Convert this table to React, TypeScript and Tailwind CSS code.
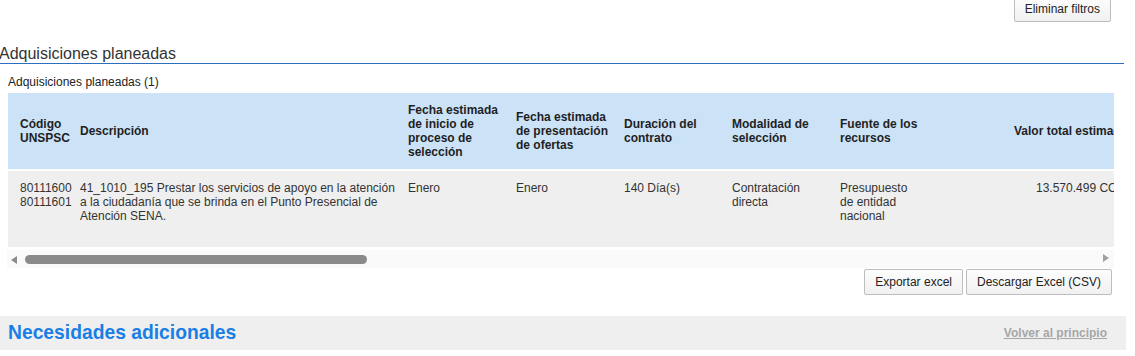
import React from "react";

const font = { fontFamily: '"Liberation Sans", Arial, sans-serif' };

function Btn({ children }: { children: React.ReactNode }) {
  return (
    <button className="h-[26px] px-[10px] border border-[#bdbdbd] rounded-[2px] bg-gradient-to-b from-[#fdfdfd] to-[#f1f1f1] text-[12px] text-[#222] leading-[14px]">
      {children}
    </button>
  );
}

export default function App() {
  const headCls = "w-[108px] shrink-0 pr-[12px] font-bold";
  const cellCls = "w-[108px] shrink-0 pr-[12px]";
  return (
    <div className="w-[1135px] h-[356px] bg-white overflow-hidden" style={font}>
      <div className="w-[1126px]">
        <div className="flex justify-end pr-[15px] -mt-[4px]">
          <Btn>Eliminar filtros</Btn>
        </div>
        <div className="mt-[23px] mr-[2px] -ml-[1px] border-b border-[#2d6fbe] text-[16px] leading-[18px] text-[#333]">
          Adquisiciones planeadas
        </div>
        <div className="mt-[11px] ml-[8px] text-[12px] leading-[14px] text-[#222]">
          Adquisiciones planeadas (1)
        </div>
        <div className="mt-[4px] ml-[8px] w-[1106px] overflow-hidden text-[12px] leading-[14px]">
          <div className="w-[1400px]">
            <div className="flex items-center h-[76px] bg-[#cce2f7] text-[#1f1f1f]">
              <div className="w-[72px] shrink-0 pl-[12px] font-bold">
                Código
                <br />
                UNSPSC
              </div>
              <div className="w-[328px] shrink-0 pr-[12px] font-bold">Descripción</div>
              <div className={headCls}>Fecha estimada de inicio de proceso de selección</div>
              <div className={headCls}>Fecha estimada de presentación de ofertas</div>
              <div className={headCls}>Duración del contrato</div>
              <div className={headCls}>Modalidad de selección</div>
              <div className={headCls}>Fuente de los recursos</div>
              <div className="w-[300px] shrink-0 pl-[66px] font-bold whitespace-nowrap">
                Valor total estimado
              </div>
            </div>
            <div className="flex items-start h-[76px] mt-[2px] pt-[10px] bg-[#efefef] text-[#333]">
              <div className="w-[72px] shrink-0 pl-[12px]">
                80111600
                <br />
                80111601
              </div>
              <div className="w-[328px] shrink-0 pr-[12px]">
                41_1010_195 Prestar los servicios de apoyo en la atención a la ciudadanía que se brinda en
                el Punto Presencial de Atención SENA.
              </div>
              <div className={cellCls}>Enero</div>
              <div className={cellCls}>Enero</div>
              <div className={cellCls}>140 Día(s)</div>
              <div className={cellCls}>Contratación directa</div>
              <div className={cellCls}>
                <div className="w-[80px]">Presupuesto de entidad nacional</div>
              </div>
              <div className="w-[300px] shrink-0 pl-[88px] whitespace-nowrap">13.570.499 COP</div>
            </div>
          </div>
        </div>
        <div className="mt-[3px] ml-[7px] w-[1107px] h-[18px] bg-[#fafafa] flex items-center">
          <svg width="6" height="8" viewBox="0 0 6 8" className="ml-[4px] mt-[1px]">
            <polygon points="6,0 6,8 0,4" fill="#8c8c8c" />
          </svg>
          <div className="ml-[8px] w-[342px] h-[9px] rounded-full bg-[#8a8a8a] mt-[1px]" />
          <div className="flex-1" />
          <svg width="6" height="8" viewBox="0 0 6 8" className="mr-[5px] -mt-[2px]">
            <polygon points="0,0 6,4 0,8" fill="#a0a0a0" />
          </svg>
        </div>
        <div className="mt-[1px] flex justify-end gap-[3px] pr-[14px]">
          <Btn>Exportar excel</Btn>
          <Btn>Descargar Excel (CSV)</Btn>
        </div>
        <div className="mt-[21px] h-[34px] bg-[#efefef] flex items-center justify-between pl-[8px] pr-[19px]">
          <span className="text-[19.3px] font-bold text-[#1a7fe4] leading-[22px]">
            Necesidades adicionales
          </span>
          <a className="text-[12px] font-bold text-[#a6a6a6] underline leading-[14px]">
            Volver al principio
          </a>
        </div>
      </div>
    </div>
  );
}
